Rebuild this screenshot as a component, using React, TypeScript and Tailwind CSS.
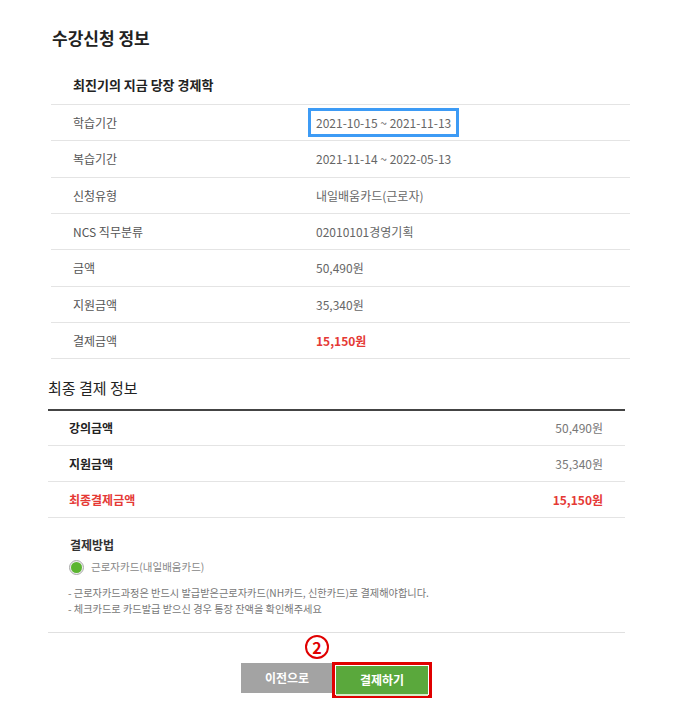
import React from "react";

const font = { fontFamily: '"Noto Sans CJK KR", "Noto Sans", sans-serif' };

const courseRows = [
  { label: "학습기간", value: "2021-10-15 ~ 2021-11-13", boxed: true, h: "h-[36px]" },
  { label: "복습기간", value: "2021-11-14 ~ 2022-05-13", h: "h-[37px]" },
  { label: "신청유형", value: "내일배움카드(근로자)", h: "h-[36px]" },
  { label: "NCS 직무분류", value: "02010101경영기획", h: "h-[36px]" },
  { label: "금액", value: "50,490원", h: "h-[37px]" },
  { label: "지원금액", value: "35,340원", h: "h-[36px]" },
  { label: "결제금액", value: "15,150원", red: true, h: "h-[36px]" },
];

const payRows = [
  { label: "강의금액", value: "50,490원" },
  { label: "지원금액", value: "35,340원" },
  { label: "최종결제금액", value: "15,150원", red: true },
];

export default function App() {
  return (
    <div
      className="w-[695px] min-h-[718px] bg-white pt-[26px] pl-[48px] pr-[65px] text-[#333]"
      style={font}
    >
      <h1 className="ml-[4px] text-[17px] leading-[24px] font-bold text-[#222]">수강신청 정보</h1>

      <div className="ml-[3px]">
        <div className="pl-[22px] pt-[26px] pb-[10px] text-[13px] leading-[18px] font-bold text-[#222]">
          최진기의 지금 당장 경제학
        </div>
        <div className="border-t border-[#e4e4e4]">
          {courseRows.map((r) => (
            <div key={r.label} className={`flex items-center ${r.h} border-b border-[#e4e4e4] text-[12px]`}>
              <div className="w-[265px] pl-[22px] text-[#555]">{r.label}</div>
              {r.boxed ? (
                <span className="-ml-[8px] inline-flex items-center h-[29px] px-[5px] border-[3px] border-[#3d9bf5] text-[#666]">
                  {r.value}
                </span>
              ) : (
                <div className={r.red ? "font-bold text-[#e53935]" : "text-[#666]"}>{r.value}</div>
              )}
            </div>
          ))}
        </div>
      </div>

      <div className="mr-[5px]">
        <h2 className="mt-[18px] mb-[10px] text-[15px] leading-[22px] text-[#222]">최종 결제 정보</h2>
        <div className="border-t-2 border-[#444]">
          {payRows.map((r, i) => (
            <div
              key={r.label}
              className={`flex items-center justify-between ${i === 0 ? "h-[35px]" : "h-[36px]"} border-b border-[#e4e4e4] pl-[21px] pr-[22px] text-[12px]`}
            >
              <span className={r.red ? "font-bold text-[#e53935]" : "font-bold text-[#222]"}>{r.label}</span>
              <span className={r.red ? "font-bold text-[#e53935]" : "text-[#777]"}>{r.value}</span>
            </div>
          ))}
        </div>

        <div className="pl-[22px] pb-[15px] border-b border-[#e0e0e0]">
          <div className="pt-[18px] text-[12px] leading-[18px] font-bold text-[#333]">결제방법</div>
          <label className="mt-[4px] flex items-center h-[18px] gap-[7px] -ml-[1px]">
            <span className="flex items-center justify-center w-[15px] h-[15px] rounded-full border border-[#aaa] bg-[#eee]">
              <span className="w-[11px] h-[11px] rounded-full bg-[#5cb531]" />
            </span>
            <span className="text-[10.5px] text-[#888]">근로자카드(내일배움카드)</span>
          </label>
          <div className="mt-[9px] -ml-[2px] text-[10.2px] leading-[16px] text-[#777]">
            <p>- 근로자카드과정은 반드시 발급받은근로자카드(NH카드, 신한카드)로 결제해야합니다.</p>
            <p>- 체크카드로 카드발급 받으신 경우 통장 잔액을 확인해주세요</p>
          </div>
        </div>

        <div className="pl-[257px] mt-[2px]">
          <span className="flex items-center justify-center w-[24px] h-[24px] rounded-full border-[2px] border-[#e00000] text-[16px] leading-none font-bold text-[#e00000]">
            2
          </span>
        </div>

        <div className="mt-[3px] flex justify-center items-start">
          <button className="mt-[1px] w-[92px] h-[30px] bg-[#a3a3a3] text-white text-[12px] font-bold">
            이전으로
          </button>
          <div className="-ml-[1px] w-[100px] h-[36px] border-[3px] border-[#e00000] pl-[1px] pt-[1px]">
            <button className="w-[92px] h-[30px] bg-[#5aa83c] border-b-2 border-[#d6ecc8] text-white text-[12px] font-bold">
              결제하기
            </button>
          </div>
        </div>
      </div>
    </div>
  );
}
